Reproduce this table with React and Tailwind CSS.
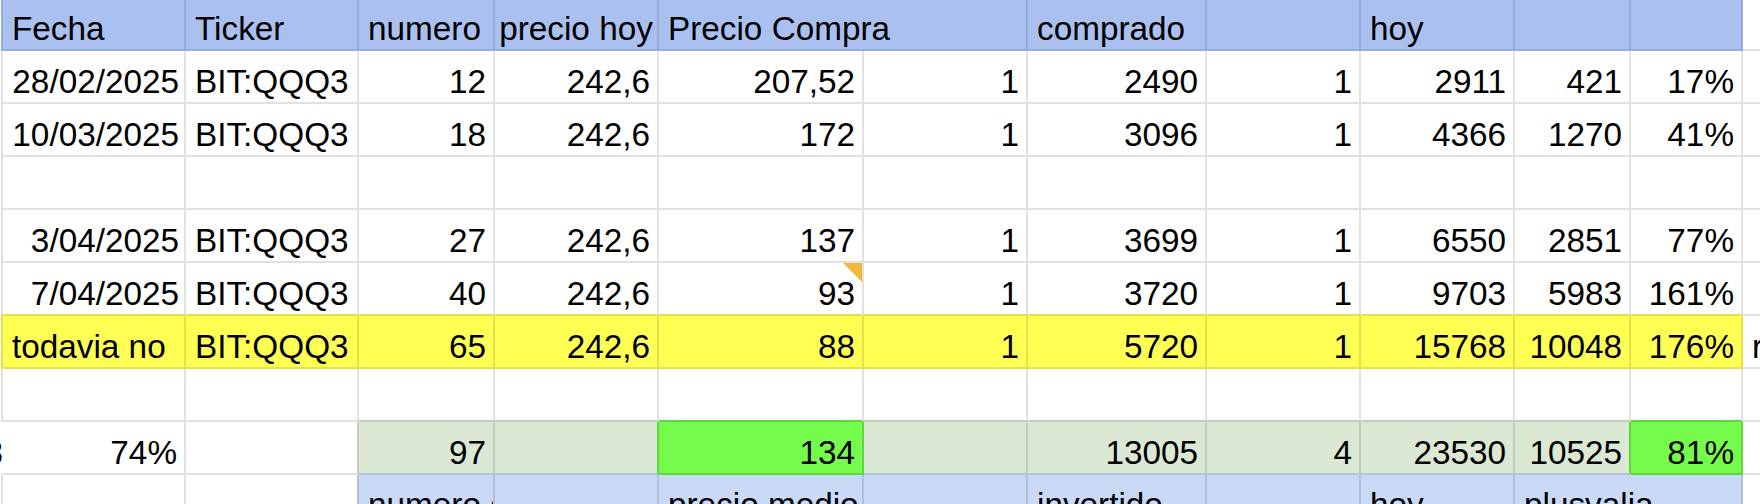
import React from 'react';

const GR = 'border-r-[#e1e1e1]';
const GB = 'border-b-[#e1e1e1]';

function Cell({ w, bg = 'bg-white', r = GR, b = GB, l = '', right = false, date = false, center = false, top = false, clip = false, children }) {
  const cls = [
    w,
    'relative shrink-0 border-r-2 border-b-2 flex whitespace-nowrap',
    bg,
    r,
    b,
    l ? 'border-l-2 ' + l : '',
    date ? 'justify-end pl-[5px] pr-[5px]' : right ? 'justify-end pl-[7px] pr-[7px]' : center ? 'justify-center px-[2px]' : 'justify-start pl-[9px] pr-[5px]',
    top ? 'items-start pt-[11px]' : 'items-end pb-[1px]',
    clip ? 'overflow-hidden' : '',
  ].join(' ');
  return <div className={cls}>{children}</div>;
}

const W = ['w-[185px]', 'w-[173px]', 'w-[136px]', 'w-[164px]', 'w-[205px]', 'w-[164px]', 'w-[179px]', 'w-[154px]', 'w-[154px]', 'w-[116px]', 'w-[112px]', 'w-[220px]'];

function DataRow({ vals, last = false }) {
  const yb = last ? 'border-b-[#e6e14a]' : GB;
  return (
    <div className="flex h-[53px]">
      <Cell w={W[0]} l="border-l-[#e1e1e1]" b={yb} date>{vals[0]}</Cell>
      <Cell w={W[1]} b={yb}>{vals[1]}</Cell>
      {vals.slice(2).map((v, i) => (
        <Cell key={i} w={W[i + 2]} b={yb} right>
          {v}
          {last && i === 2 ? (
            <span className="absolute top-0 right-0 w-0 h-0 border-t-[19px] border-t-[#f2b83d] border-l-[19px] border-l-transparent" />
          ) : null}
        </Cell>
      ))}
      <Cell w={W[11]} />
    </div>
  );
}

function EmptyRow({ greenBelow = false }) {
  const bs = greenBelow
    ? [GB, GB, 'border-b-[#c2cebe]', 'border-b-[#c2cebe]', 'border-b-[#60d83d]', 'border-b-[#c2cebe]', 'border-b-[#c2cebe]', 'border-b-[#c2cebe]', 'border-b-[#c2cebe]', 'border-b-[#c2cebe]', 'border-b-[#60d83d]']
    : [GB, GB, GB, GB, GB, GB, GB, GB, GB, GB, GB];
  return (
    <div className="flex h-[53px]">
      <Cell w={W[0]} l="border-l-[#e1e1e1]" b={bs[0]} />
      {bs.slice(1).map((b, i) => (
        <Cell key={i} w={W[i + 1]} b={b} />
      ))}
      <Cell w={W[11]} />
    </div>
  );
}

export default function App() {
  const HB = 'bg-[#aac1ef]';
  const HR = 'border-r-[#94acd9]';
  const HBB = 'border-b-[#94acd9]';
  const YB = 'bg-[#ffff54]';
  const YR = 'border-r-[#e6e14a]';
  const YBB = 'border-b-[#e6e14a]';
  const LG = 'bg-[#dbe9d4]';
  const LGR = 'border-r-[#c2cebe]';
  const BG = 'bg-[#75fb4c]';
  const BGR = 'border-r-[#60d83d]';
  const TB = 'border-b-[#b6c3d9]';
  const BGB = 'border-b-[#60d83d]';
  const BL = 'bg-[#c9d9f6]';
  const BLR = 'border-r-[#b1c0dd]';

  const yellow = ['todavia no', 'BIT:QQQ3', '65', '242,6', '88', '1', '5720', '1', '15768', '10048', '176%'];

  return (
    <div className="w-[1760px] h-[504px] overflow-hidden bg-white pl-[1px] text-black text-[33.3px] leading-[normal] font-['Liberation_Sans',Arial,sans-serif]">
      {/* Header */}
      <div className="flex h-[51px]">
        <Cell w={W[0]} bg={HB} r={HR} b={HBB} l="border-l-[#94acd9]">Fecha</Cell>
        <Cell w={W[1]} bg={HB} r={HR} b={HBB}>Ticker</Cell>
        <Cell w={W[2]} bg={HB} r={HR} b={HBB}>numero</Cell>
        <Cell w={W[3]} bg={HB} r={HR} b={HBB} center>precio hoy</Cell>
        <Cell w="w-[369px]" bg={HB} r={HR} b={HBB}>Precio Compra</Cell>
        <Cell w={W[6]} bg={HB} r={HR} b={HBB}>comprado</Cell>
        <Cell w={W[7]} bg={HB} r={HR} b={HBB} />
        <Cell w={W[8]} bg={HB} r={HR} b={HBB}>hoy</Cell>
        <Cell w={W[9]} bg={HB} r={HR} b={HBB} />
        <Cell w={W[10]} bg={HB} r={HR} b={HBB} />
        <Cell w={W[11]} />
      </div>

      <DataRow vals={['28/02/2025', 'BIT:QQQ3', '12', '242,6', '207,52', '1', '2490', '1', '2911', '421', '17%']} />
      <DataRow vals={['10/03/2025', 'BIT:QQQ3', '18', '242,6', '172', '1', '3096', '1', '4366', '1270', '41%']} />
      <EmptyRow />
      <DataRow vals={['3/04/2025', 'BIT:QQQ3', '27', '242,6', '137', '1', '3699', '1', '6550', '2851', '77%']} />
      <DataRow last vals={['7/04/2025', 'BIT:QQQ3', '40', '242,6', '93', '1', '3720', '1', '9703', '5983', '161%']} />

      {/* Yellow row */}
      <div className="flex h-[53px]">
        <Cell w={W[0]} bg={YB} r={YR} b={YBB} l="border-l-[#e6e14a]">{yellow[0]}</Cell>
        <Cell w={W[1]} bg={YB} r={YR} b={YBB}>{yellow[1]}</Cell>
        {yellow.slice(2).map((v, i) => (
          <Cell key={i} w={W[i + 2]} bg={YB} r={YR} b={YBB} right>{v}</Cell>
        ))}
        <Cell w={W[11]}>rentabilidad</Cell>
      </div>

      <EmptyRow greenBelow />

      {/* Totals row */}
      <div className="flex h-[53px]">
        <Cell w={W[0]} l="border-l-white" right>
          <span className="absolute left-[-18.5px] bottom-[1px]">8</span>
          74%
        </Cell>
        <Cell w={W[1]} r={LGR} />
        <Cell w={W[2]} bg={LG} r={LGR} b={TB} right>97</Cell>
        <Cell w={W[3]} bg={LG} r={BGR} b={TB} />
        <Cell w={W[4]} bg={BG} r={BGR} b={BGB} right>134</Cell>
        <Cell w={W[5]} bg={LG} r={LGR} b={TB} />
        <Cell w={W[6]} bg={LG} r={LGR} b={TB} right>13005</Cell>
        <Cell w={W[7]} bg={LG} r={LGR} b={TB} right>4</Cell>
        <Cell w={W[8]} bg={LG} r={LGR} b={TB} right>23530</Cell>
        <Cell w={W[9]} bg={LG} r={BGR} b={TB} right>10525</Cell>
        <Cell w={W[10]} bg={BG} r={BGR} b={BGB} right>81%</Cell>
        <Cell w={W[11]} />
      </div>

      {/* Blue row */}
      <div className="flex h-[53px]">
        <Cell w={W[0]} l="border-l-[#e1e1e1]" top />
        <Cell w={W[1]} r={BLR} top />
        <Cell w={W[2]} bg={BL} r={BLR} top clip>numero de acciones</Cell>
        <Cell w={W[3]} bg={BL} r={BLR} top />
        <Cell w={W[4]} bg={BL} r={BLR} top>precio medio</Cell>
        <Cell w={W[5]} bg={BL} r={BLR} top />
        <Cell w={W[6]} bg={BL} r={BLR} top>invertido</Cell>
        <Cell w={W[7]} bg={BL} r={BLR} top />
        <Cell w={W[8]} bg={BL} r={BLR} top>hoy</Cell>
        <Cell w="w-[228px]" bg={BL} r={BLR} top>plusvalia</Cell>
        <Cell w={W[11]} top />
      </div>
    </div>
  );
}
